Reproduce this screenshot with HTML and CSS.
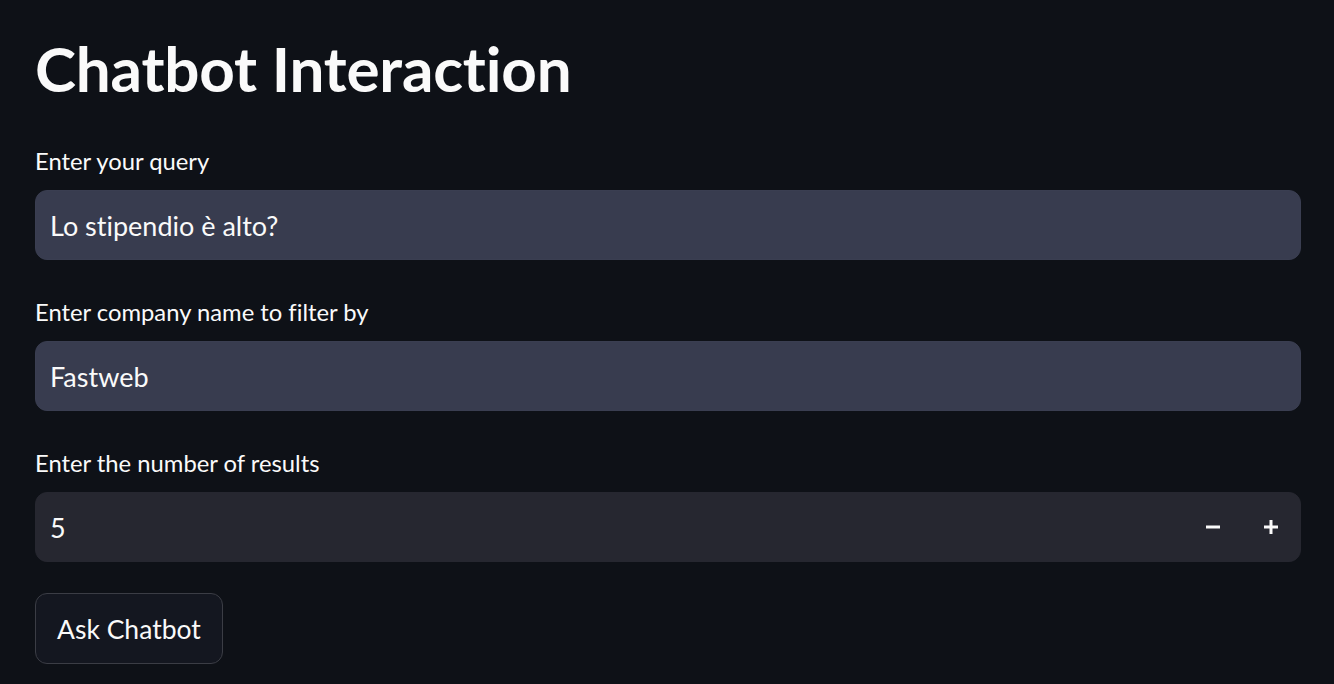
FILE: index.html
```html
<!DOCTYPE html>
<html lang="en">
<head>
<meta charset="utf-8">
<title>Chatbot Interaction</title>
<link rel="stylesheet" href="styles.css">
</head>
<body>
<main class="page">
  <h1 class="title">Chatbot Interaction</h1>
  <div class="field">
    <label class="label">Enter your query</label>
    <div class="input">Lo stipendio è alto?</div>
  </div>
  <div class="field">
    <label class="label">Enter company name to filter by</label>
    <div class="input">Fastweb</div>
  </div>
  <div class="field">
    <label class="label">Enter the number of results</label>
    <div class="input number">
      <span class="num-value">5</span>
      <span class="step">
        <svg width="16" height="16" viewBox="0 0 16 16"><rect x="1" y="6.5" width="14" height="3" fill="#fafafa"/></svg>
      </span>
      <span class="step">
        <svg width="16" height="16" viewBox="0 0 16 16"><rect x="1" y="6.5" width="14" height="3" fill="#fafafa"/><rect x="6.5" y="1" width="3" height="14" fill="#fafafa"/></svg>
      </span>
    </div>
  </div>
  <button class="btn">Ask Chatbot</button>
</main>
</body>
</html>
```

FILE: styles.css
```css
html, body {
  margin: 0;
  padding: 0;
  background: #0e1117;
  color: #fafafa;
  font-family: "Lato", "Liberation Sans", sans-serif;
  font-variant-ligatures: none;
}
.page {
  display: flex;
  flex-direction: column;
  align-items: flex-start;
  padding: 28px 33px 0 35px;
}
.title {
  margin: 0 0 38px 0;
  font-size: 62px;
  line-height: 80px;
  font-weight: 700;
  letter-spacing: -0.2px;
}
.field {
  display: flex;
  flex-direction: column;
  align-self: stretch;
  margin-bottom: 37px;
}
.label {
  font-size: 23.8px;
  line-height: 30px;
  margin-bottom: 14px;
}
.input {
  box-sizing: border-box;
  height: 70px;
  border-radius: 12px;
  background: #383c4f;
  border: 1px solid #3a3e51;
  padding: 0 14px;
  display: flex;
  align-items: center;
  font-size: 27px;
}
.input.number {
  background: #262730;
  border-color: #262730;
  padding-right: 0;
}
.num-value {
  flex: 1;
}
.step {
  width: 58px;
  height: 100%;
  display: flex;
  align-items: center;
  justify-content: center;
}
.btn {
  margin-top: -6px;
  box-sizing: border-box;
  height: 71px;
  padding: 0 21px;
  background: #141720;
  border: 1px solid #3b3d45;
  border-radius: 12px;
  color: #fafafa;
  font-family: inherit;
  font-size: 26.5px;
}
```
